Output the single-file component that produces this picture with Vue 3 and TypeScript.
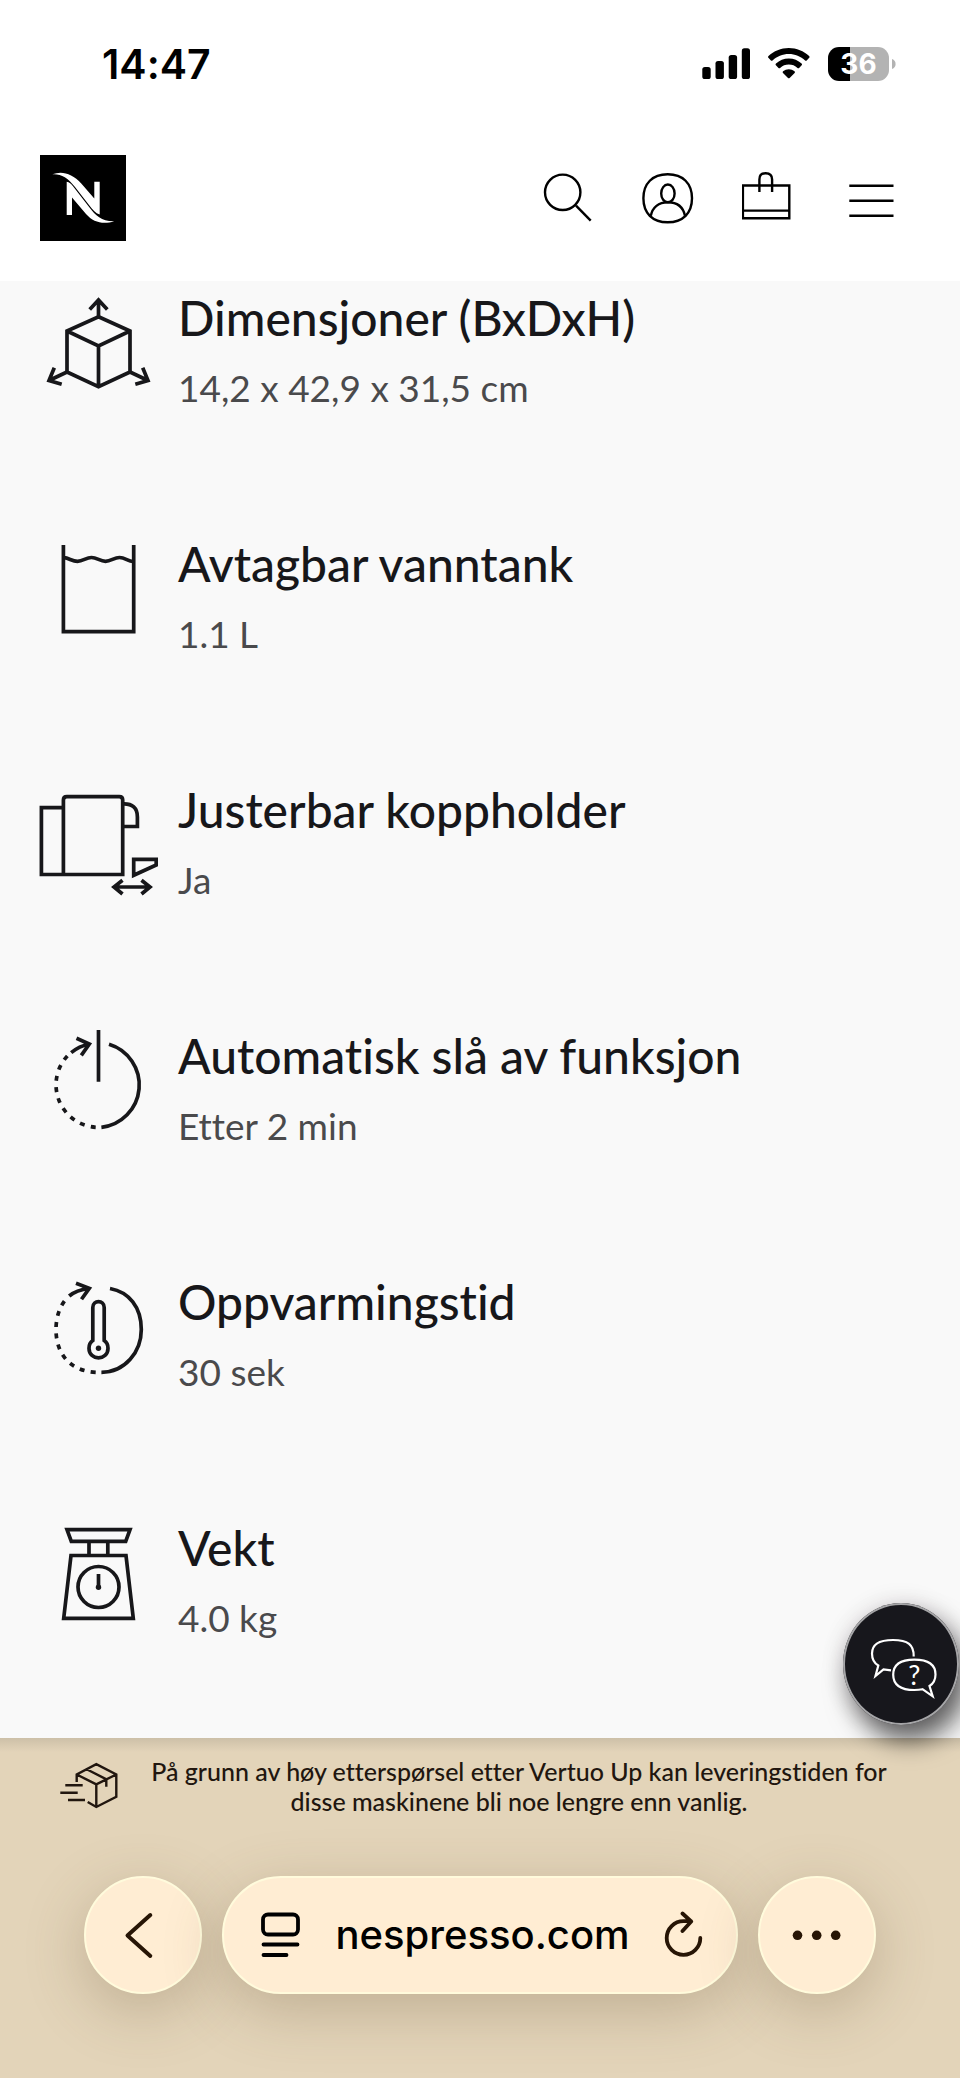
<script setup lang="ts">
import { ref } from 'vue'

type IconName = 'dimensions' | 'tank' | 'cup' | 'power' | 'heat' | 'scale'

interface Spec {
  icon: IconName
  title: string
  value: string
}

const specs: Spec[] = [
  { icon: 'dimensions', title: 'Dimensjoner (BxDxH)', value: '14,2 x 42,9 x 31,5 cm' },
  { icon: 'tank', title: 'Avtagbar vanntank', value: '1.1 L' },
  { icon: 'cup', title: 'Justerbar koppholder', value: 'Ja' },
  { icon: 'power', title: 'Automatisk slå av funksjon', value: 'Etter 2 min' },
  { icon: 'heat', title: 'Oppvarmingstid', value: '30 sek' },
  { icon: 'scale', title: 'Vekt', value: '4.0 kg' },
]

const address = ref('nespresso.com')
</script>

<template>
  <div class="page">
    <div class="status">
      <time class="clock">14:47</time>
      <div class="indicators">
        <svg class="signal" viewBox="0 0 48 34" aria-hidden="true">
          <rect x="0.3" y="20" width="8.4" height="12" rx="2.6" />
          <rect x="13.5" y="14" width="8.4" height="18" rx="2.6" />
          <rect x="26.7" y="8" width="8.4" height="24" rx="2.6" />
          <rect x="39.8" y="1.3" width="8.2" height="30.7" rx="2.6" />
        </svg>
        <svg class="wifi" viewBox="0 0 42 34" aria-hidden="true">
          <path d="M20.8 1C28.6 1 35.9 4 41.1 9.1c.6.6.6 1.1.1 1.7l-2.5 2.6c-.5.5-1.1.5-1.6 0C32.8 9.300 27 6.900 20.800 6.900S8.800 9.300 4.500 13.400c-.5.5-1.100.5-1.600 0L.4 10.800c-.5-.6-.5-1.100.1-1.700C5.700 4 13 1 20.800 1z" />
          <path d="M20.800 11.600c4.900 0 9.400 1.900 12.800 5 .6.500.6 1.100.1 1.700l-2.600 2.600c-.5.5-1.100.5-1.600 0-2.300-2.100-5.400-3.300-8.700-3.300s-6.400 1.200-8.700 3.300c-.5.5-1.100.5-1.600 0l-2.600-2.600c-.5-.6-.5-1.200.1-1.700 3.400-3.100 7.900-5 12.800-5z" />
          <path d="M20.800 22.200c2.100 0 4.100.7 5.700 2 .6.500.6 1.100.1 1.700l-5 5c-.5.500-1.100.500-1.600 0l-5-5c-.5-.6-.5-1.200.1-1.700 1.600-1.300 3.600-2 5.700-2z" />
        </svg>
        <div class="battery">
          <span class="level">36</span>
          <svg class="nub" viewBox="0 0 4 12" aria-hidden="true"><path d="M0 1c2.400.8 3.600 2.600 3.600 5S2.400 10.200 0 11z" /></svg>
        </div>
      </div>
    </div>

    <header class="nav">
      <a class="logo" href="#" aria-label="Nespresso">
        <svg viewBox="0 0 86 86" aria-hidden="true">
          <path d="M12.300 19.300C22 15.800 32 18.300 41.500 28.800L54.300 43.500V26.700h5.400V59.600C55.500 58.200 52.500 54.500 49 50L35 32C27.500 22.500 21 18.700 12.300 19.300z" />
          <path d="M26.700 26.700C29.500 27.200 31 28.700 33 31.200L49.500 52.500C55.500 60.500 62 66.700 74.300 66.300C63 69.700 53.500 67.500 46 59L32 42.500V60h-5.300z" />
        </svg>
      </a>
      <nav class="actions" aria-label="Hovedmeny">
        <button type="button" aria-label="Søk">
          <svg viewBox="0 0 52 86"><circle cx="20.700" cy="37.300" r="17.700" /><path d="M34 50.700l14.700 15" /></svg>
        </button>
        <button type="button" aria-label="Konto">
          <svg viewBox="0 0 52 86">
            <path d="M25.700 19.300C41 19.300 50 28.500 50 43.300S41 67.300 25.700 67.300 1.400 58.100 1.400 43.300 10.400 19.300 25.700 19.300z" />
            <ellipse cx="25.900" cy="38.400" rx="6.700" ry="8.900" />
            <path d="M8.800 60.800C10.500 52.500 16.500 47.300 25.900 47.300S41.200 52.500 43 60.800" />
          </svg>
        </button>
        <button type="button" aria-label="Handlekurv">
          <svg viewBox="0 0 52 86"><path d="M.9 30.500H47.300V63.300H.9zM.9 55.600H47.300M17.400 37V24.500C17.400 20.500 19.800 18.200 23.700 18.200S30.100 20.500 30.100 24.500V37" /></svg>
        </button>
        <button type="button" aria-label="Meny">
          <svg viewBox="0 0 52 86"><path d="M7.300 30.700H51.500M7.300 45.700H51.500M7.300 60.700H51.500" /></svg>
        </button>
      </nav>
    </header>

    <main class="content">
      <ul class="specs">
        <li v-for="spec in specs" :key="spec.icon" class="spec">
          <svg class="spec-icon" viewBox="0 -4 120 120" aria-hidden="true">
            <g v-if="spec.icon === 'dimensions'">
              <path d="M60.500 22.700L92 37V78L60.500 92.700 29 78V37zM29 37L60.500 52 92 37M60.500 52V92.700" />
              <path d="M60.500 23V6M51.700 15.500L60.500 6 69.300 15.500M29 78L11 86.500M16.300 73.700L11 86.500 23.700 90.200M92 78L110 86.500M104.700 73.700L110 86.500 97.300 90.200" />
            </g>
            <g v-else-if="spec.icon === 'tank'">
              <path d="M25.400 5V91.700H95.700V5" />
              <path d="M26 17.700C31 18 34 21.300 39.500 21.300S48 17.500 53.500 17.500 62 21.300 67.500 21.300 76 17.500 81.500 17.500 90 21.200 95 21.500" />
            </g>
            <g v-else-if="spec.icon === 'cup'">
              <path d="M25.400 21.600H3.400V88.500H84.700V14C84.700 11.800 83.500 10.600 81.300 10.600H28.800C26.600 10.600 25.400 11.800 25.400 14V88.500" />
              <path d="M84.700 18C94.500 17.500 99.400 22 99.400 31V40.500H84.700M95.700 73.400H118.200V79L95.700 89.300z" />
              <path d="M76 101H112M84.500 94.300L76 101 84.500 108M103.500 94.300L112 101 103.500 108" />
            </g>
            <g v-else-if="spec.icon === 'power'">
              <path d="M60.500-2V49.700M71 12.200A42.600 42.600 0 0 1 63.400 95.300" />
              <path class="dash" d="M57.700 95.300A42.600 42.600 0 0 1 30 23.200" />
              <path d="M33.200 20.600A42.600 42.600 0 0 1 51.300 12M38.500 6.300L51.300 12 43.300 23.400" />
            </g>
            <g v-else-if="spec.icon === 'heat'">
              <path d="M72 10.500C91 14 103.300 29 103.300 51.500S87 94.300 63.400 94.300" />
              <path class="dash" d="M57.700 94.300C33 93 18 77 18 51.500C18 38 22.500 27 28.500 20.500" />
              <path d="M31.200 18C37 13 43.500 11.300 51.300 10.300M38 5.300L51.300 10.300 43.500 21.300" />
              <path d="M54.800 62.500V29.500C54.800 21.700 66.200 21.700 66.200 29.500V62.500C68.700 64.200 70 67 70 70.200 70 83 51 83 51 70.200 51 67 52.300 64.200 54.800 62.500z" />
              <circle class="solid" cx="60.500" cy="70.300" r="2.700" />
            </g>
            <g v-else>
              <path d="M29 5.700H92L87.700 17.300H33.300zM51 17.300V31.300M69.800 17.300V31.300M33 31.500H88L95.300 94.400H25.700z" />
              <circle cx="60.500" cy="63" r="20.500" />
              <path d="M60.500 50V63" />
              <circle class="solid" cx="60.500" cy="63.300" r="2.700" />
            </g>
          </svg>
          <div class="spec-text">
            <h2>{{ spec.title }}</h2>
            <p>{{ spec.value }}</p>
          </div>
        </li>
      </ul>

      <button class="chat" type="button" aria-label="Chat">
        <svg viewBox="0 0 116 122">
          <path d="M70.700 53.500C71 42 65 37 50 37S29 42 29 50.500C29 56 31 60 35.300 62.500L32.500 73 40.500 66.300 48 67.300" />
          <path d="M71.300 56.600C86 56.600 92.500 62 92.500 71.500 92.500 76.500 90.500 80.500 86.500 83L89.700 93.300 79.500 86.200C77 86.800 74 87 71.300 87 57 87 50.200 81.500 50.200 71.800S57 56.600 71.300 56.600z" />
          <text x="71.300" y="81.500" text-anchor="middle">?</text>
        </svg>
      </button>
    </main>

    <footer class="bottom">
      <div class="notice">
        <svg class="parcel" viewBox="0 0 58 48" aria-hidden="true">
          <path d="M16.700 20V12.500L36.300 2.200 56.300 12.500V34.700L36.300 45 27.700 40M16.700 12.500L36.300 22.300 56.300 12.500M36.300 22.300V45M26.700 7.300L46.300 17.300V24.700M5.300 23.300H22.700M.3 30.700H17.700M8 38H25" />
        </svg>
        <p>På grunn av høy etterspørsel etter Vertuo Up kan leveringstiden for disse maskinene bli noe lengre enn vanlig.</p>
      </div>
      <div class="toolbar">
        <button class="glass round" type="button" aria-label="Tilbake">
          <svg viewBox="0 0 118 118"><path class="thick" d="M66.300 39L43.500 59.500 66.300 80" /></svg>
        </button>
        <form class="glass pill" @submit.prevent>
          <button type="button" aria-label="Sidemeny">
            <svg class="tool" viewBox="0 0 40 48">
              <rect x="2" y="3.500" width="35" height="20" rx="5" />
              <path d="M2.500 33.500H36.500M2.500 44H25.500" />
            </svg>
          </button>
          <input v-model="address" type="text" aria-label="Adresse" />
          <button type="submit" aria-label="Last inn på nytt">
            <svg class="tool brown" viewBox="0 0 40 48">
              <path d="M36.300 27A16.800 16.800 0 1 1 19.500 10.200H27M18.500 2.500L27.200 10.500 18.500 20" />
            </svg>
          </button>
        </form>
        <button class="glass round" type="button" aria-label="Mer">
          <svg viewBox="0 0 118 118"><g class="dots"><circle cx="39.500" cy="59.300" r="4.800" /><circle cx="58.700" cy="59.300" r="4.800" /><circle cx="77.700" cy="59.300" r="4.800" /></g></svg>
        </button>
      </div>
    </footer>
  </div>
</template>

<style>
body {
  margin: 0;
}
</style>

<style scoped>
* {
  box-sizing: border-box;
}

.page {
  display: flex;
  flex-direction: column;
  min-height: 100vh;
  background: #fff;
  color: #17171a;
  font-family: Lato, "Open Sans", sans-serif;
  font-variant-ligatures: none;
}

h2,
p,
ul {
  margin: 0;
  padding: 0;
}

button {
  padding: 0;
  border: 0;
  background: none;
  color: inherit;
  cursor: pointer;
}

svg {
  display: block;
  fill: none;
}

.status {
  display: flex;
  align-items: center;
  justify-content: space-between;
  height: 128px;
  padding: 0 64px 0 102px;
  color: #000;
  font-family: Inter, sans-serif;
}

.clock {
  font-size: 41px;
  font-weight: 600;
  line-height: 48px;
}

.indicators {
  display: flex;
  align-items: center;
  gap: 18px;
}

.signal {
  width: 48px;
  height: 34px;
  fill: #000;
}

.wifi {
  width: 42px;
  height: 34px;
  fill: #000;
}

.battery {
  display: flex;
  align-items: center;
  gap: 3px;
  width: 68px;
}

.level {
  width: 61px;
  height: 34px;
  border-radius: 11px;
  background: linear-gradient(to right, #000 36%, #b3b3b3 36%);
  color: #fff;
  font-size: 28px;
  font-weight: 700;
  line-height: 34px;
  text-align: center;
}

.nub {
  width: 4px;
  height: 12px;
  fill: #b3b3b3;
}

.nav {
  display: flex;
  justify-content: space-between;
  padding: 27px 66px 40px 40px;
}

.logo {
  width: 86px;
  height: 86px;
  background: #000;
}

.logo svg {
  fill: #fff;
}

.actions {
  display: flex;
  gap: 48px;
}

.actions svg {
  width: 52px;
  height: 86px;
  stroke: #000;
  stroke-width: 2.400;
}

.content {
  position: relative;
  flex: 1;
  padding: 9px 38px 80px;
  background: #f9f9f9;
}

.specs {
  display: flex;
  flex-direction: column;
  gap: 124px;
  list-style: none;
}

.spec {
  display: flex;
  gap: 20px;
}

.spec-icon {
  flex: none;
  width: 120px;
  height: 120px;
  stroke: #17171a;
  stroke-width: 3.700;
}

.dash {
  stroke-dasharray: 5 6.300;
}

.solid {
  fill: #17171a;
  stroke: none;
}

.spec-text {
  display: flex;
  flex-direction: column;
  gap: 18px;
}

h2 {
  font-size: 48px;
  font-weight: 500;
  line-height: 56px;
}

.spec-text p {
  color: #4a4a4c;
  font-size: 37px;
  line-height: 48px;
}

.chat {
  position: absolute;
  right: 1px;
  bottom: 13px;
  z-index: 1;
  width: 116px;
  height: 122px;
  border-radius: 50%;
  background: #17171c;
  box-shadow: inset 0 0 0 2px #a5a5a7, 8px 16px 26px rgba(0, 0, 0, 0.6), 0 0 24px rgba(40, 20, 30, 0.12);
}

.chat svg {
  width: 116px;
  height: 122px;
  stroke: #fff;
  stroke-width: 2.200;
}

.chat text {
  fill: #fff;
  stroke: none;
  font-family: Lato, sans-serif;
  font-size: 27px;
}

.bottom {
  padding: 18px 84px 84px;
  background: linear-gradient(#cdc0a8, #e3d4b9 14px);
}

.notice {
  display: flex;
  align-items: center;
  gap: 24px;
  margin: 0 -20px 60px -24px;
  color: #21160f;
}

.notice p {
  flex: 1;
  font-size: 25px;
  font-weight: 500;
  line-height: 30px;
  text-align: center;
}

.parcel {
  flex: none;
  width: 58px;
  height: 48px;
  stroke: #21160f;
  stroke-width: 2.400;
}

.toolbar {
  display: flex;
  gap: 20px;
}

.glass {
  height: 118px;
  border: 2px solid #fffbdc;
  border-radius: 59px;
  background: #ffedd3;
  box-shadow: 0 16px 60px rgba(100, 80, 50, 0.28);
}

.round {
  display: flex;
  align-items: center;
  justify-content: center;
  flex: none;
  width: 118px;
}

.round svg {
  flex: none;
  width: 118px;
  height: 118px;
}

.thick {
  stroke: #271505;
  stroke-width: 4;
  stroke-linecap: round;
  stroke-linejoin: round;
}

.dots {
  fill: #271505;
}

.pill {
  display: flex;
  flex: 1;
  align-items: center;
  min-width: 0;
  padding: 0 32px 0 37px;
}

.pill input {
  flex: 1;
  width: 0;
  min-width: 0;
  padding: 0;
  border: 0;
  outline: 0;
  background: none;
  color: #000;
  font-family: Inter, sans-serif;
  font-size: 40px;
  font-weight: 500;
  line-height: 50px;
  text-align: center;
}

.tool {
  width: 40px;
  height: 48px;
  stroke: #000;
  stroke-width: 3.800;
  stroke-linecap: round;
  stroke-linejoin: round;
}

.brown {
  stroke: #271505;
}
</style>
